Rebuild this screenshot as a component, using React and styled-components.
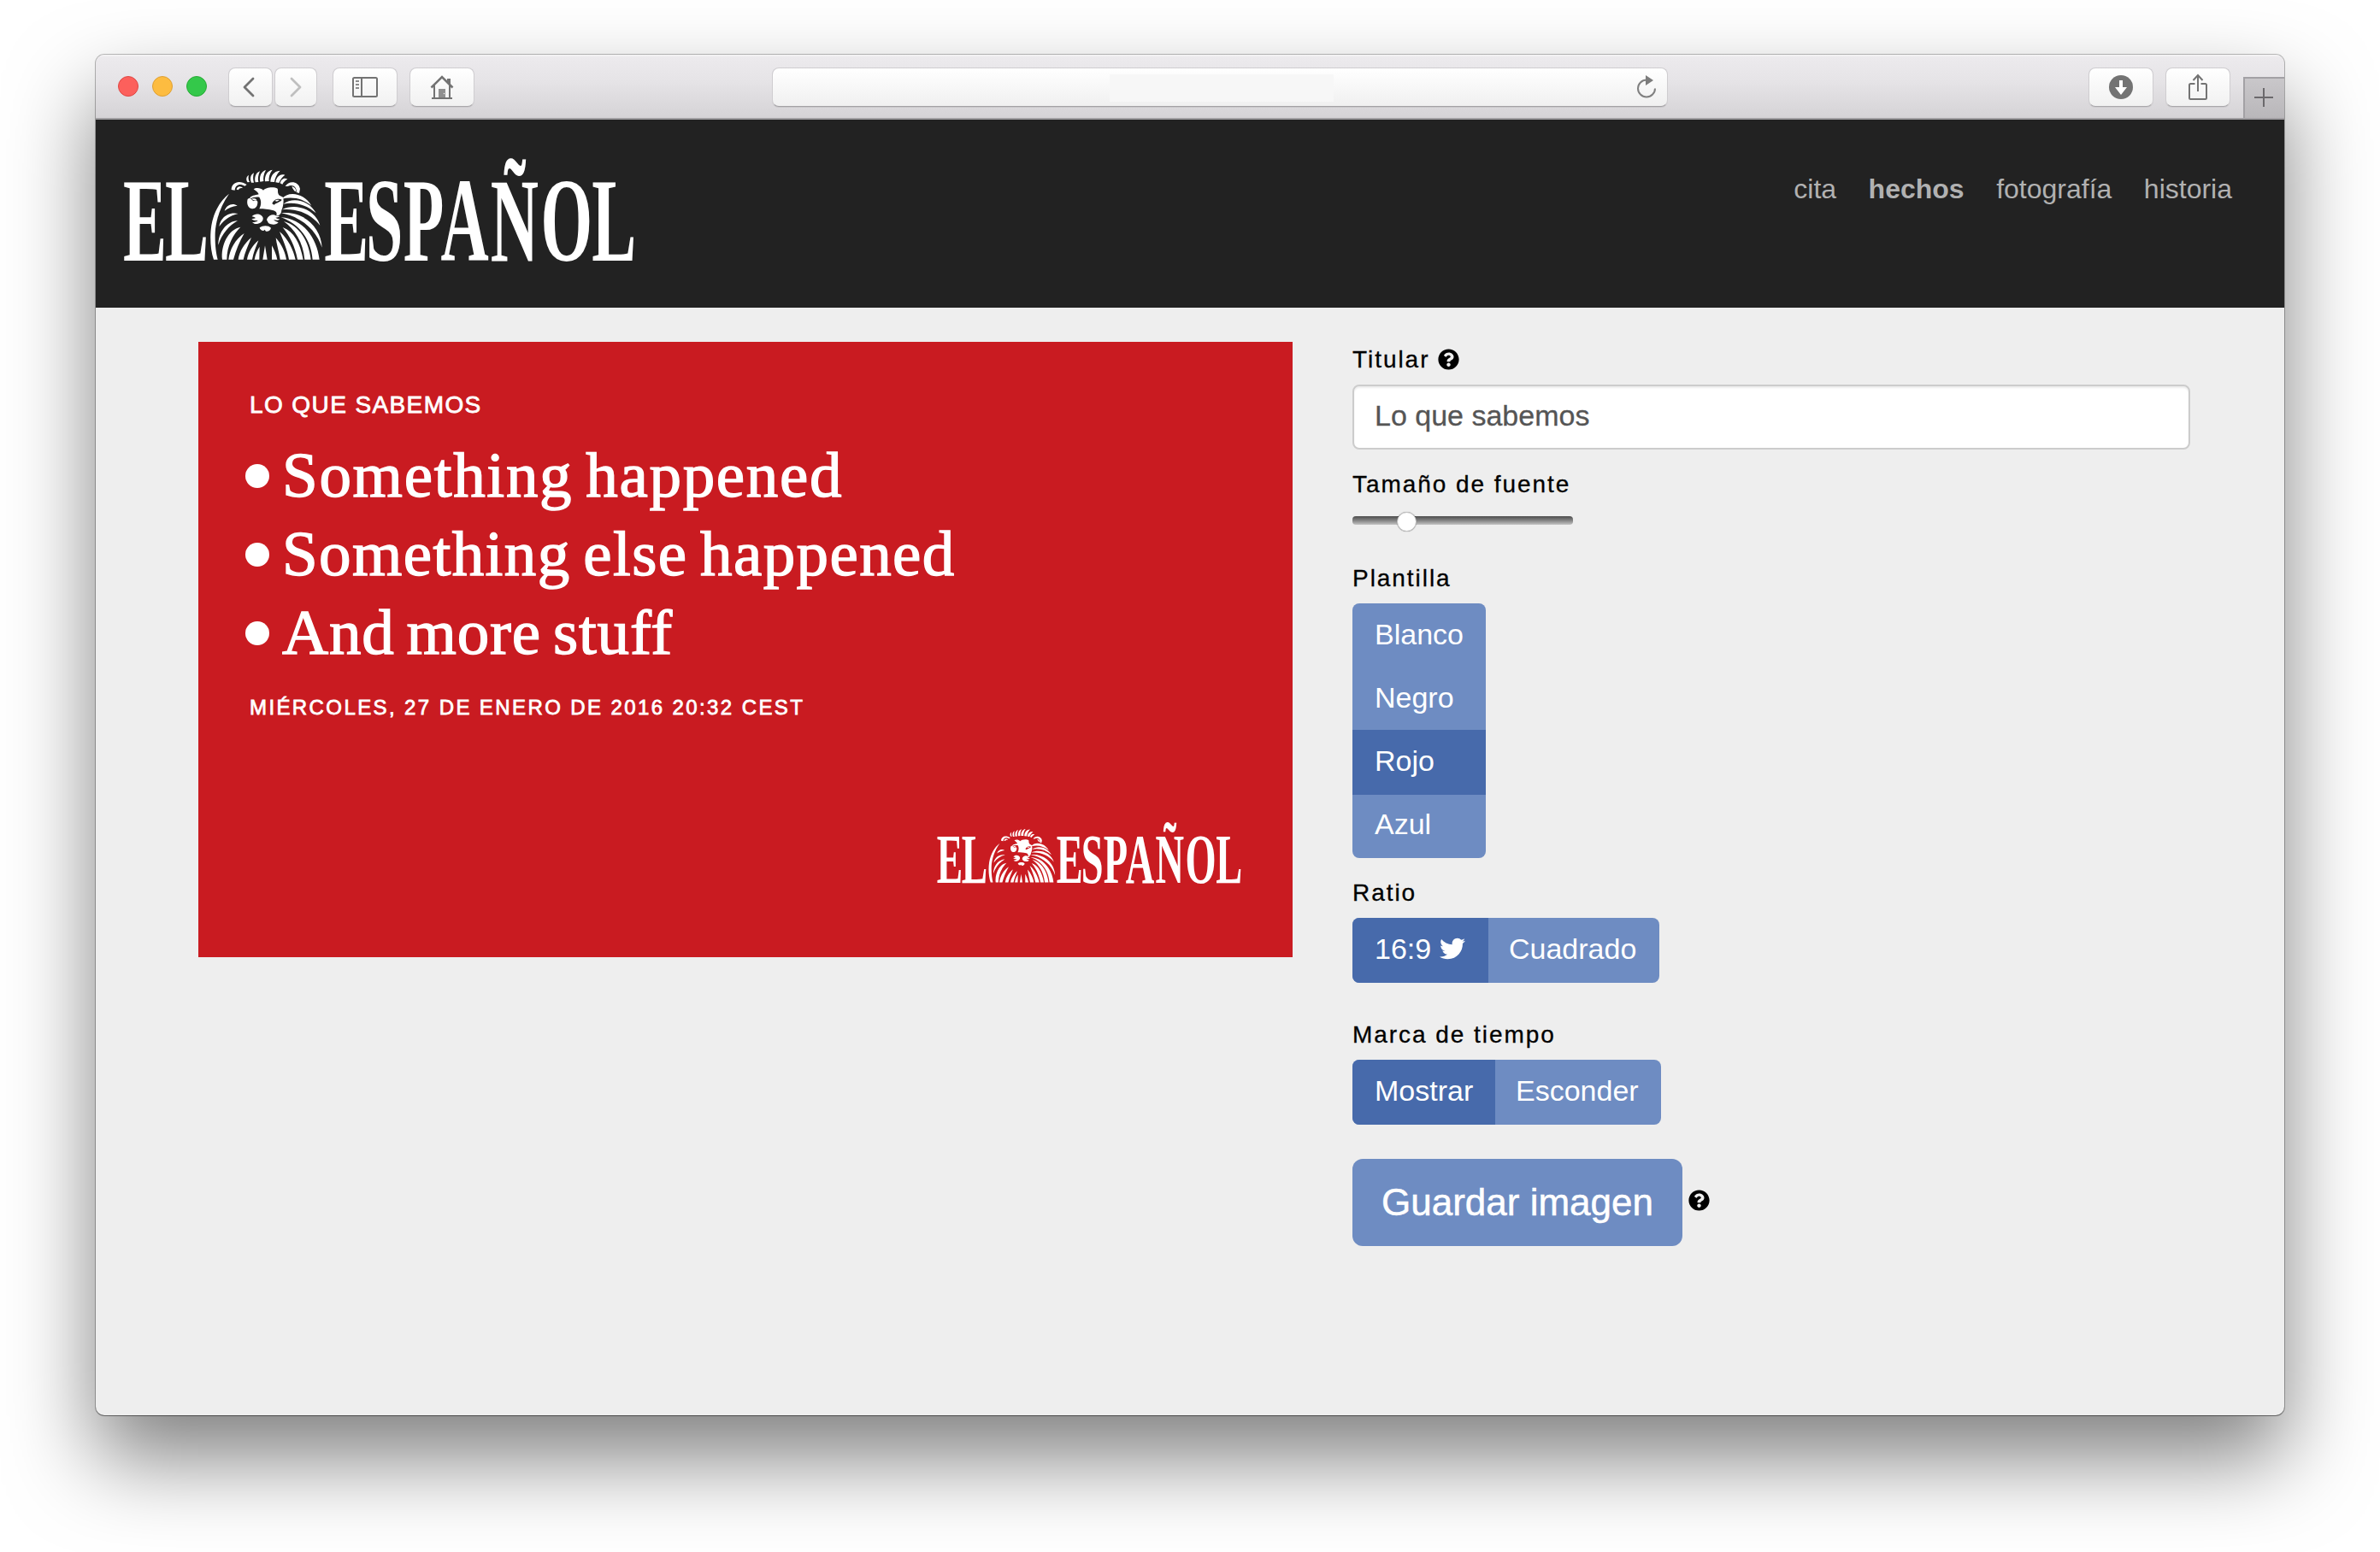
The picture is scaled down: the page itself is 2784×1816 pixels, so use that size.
import React, { useState } from "react";
import styled, { createGlobalStyle } from "styled-components";
import { FaQuestionCircle, FaTwitter } from "react-icons/fa";

const sans = `"Liberation Sans", Arial, Helvetica, sans-serif`;
const serif = `"Liberation Serif", "Times New Roman", serif`;
const blue = "#6e8cc2";
const blueActive = "#476aab";

const GlobalStyle = createGlobalStyle`
  *, *::before, *::after { box-sizing: border-box; }
  body { margin: 0; background: #fff; font-family: ${sans}; overflow: hidden; }
  button, input { font-family: inherit; margin: 0; }
`;

const Desktop = styled.div`
  width: 2784px;
  height: 1816px;
  padding: 64px 112px 0;
  overflow: hidden;
`;

const Window = styled.div`
  height: 1592px;
  border-radius: 10px;
  overflow: hidden;
  background: #eee;
  display: flex;
  flex-direction: column;
  box-shadow: 0 0 0 1px rgba(0, 0, 0, 0.26), 0 1px 1px rgba(0, 0, 0, 0.3),
    0 50px 100px rgba(0, 0, 0, 0.5);
`;

const Toolbar = styled.div`
  height: 76px;
  flex: none;
  display: grid;
  grid-template-columns: 791px 1048px 1fr;
  align-items: center;
  background: linear-gradient(#f6f5f6 0, #eceaed 3px, #e6e4e7 30px, #d5d3d6 100%);
  border-bottom: 2px solid #a09ea1;
`;

const ToolGroup = styled.div`
  display: flex;
  align-items: center;
`;

const Lights = styled.div`
  display: flex;
  gap: 16px;
  padding: 0 25px 0 26px;
`;

const Light = styled.span`
  width: 24px;
  height: 24px;
  border-radius: 50%;
  background: ${(p) => p.$fill};
  border: 1px solid ${(p) => p.$edge};
`;

const ToolButton = styled.button`
  width: ${(p) => p.$w}px;
  height: 46px;
  margin-left: ${(p) => p.$gap || 0}px;
  margin-top: 1px;
  padding: 0 1px 0 0;
  display: flex;
  align-items: center;
  justify-content: center;
  border: 1px solid #cfcdd0;
  border-bottom-color: #a9a7aa;
  border-radius: 8px;
  background: linear-gradient(#fff, #f1f1f1);
  box-shadow: 0 1px 0 rgba(0, 0, 0, 0.06);
`;

const BackButton = styled(ToolButton)`
  padding-right: 4px;
`;

const AddressBar = styled.div`
  height: 46px;
  margin-top: 1px;
  display: grid;
  grid-template-columns: 394px 262px 1fr;
  align-items: center;
  border: 1px solid #cfcdd0;
  border-bottom-color: #a3a1a4;
  border-radius: 8px;
  background: linear-gradient(#fff, #f0f0f0);
  box-shadow: 0 1px 0 rgba(0, 0, 0, 0.08);
`;

const AddressText = styled.div`
  grid-column: 2;
  height: 32px;
  margin-top: 2px;
  background: #f7f7f7;
`;

const ReloadSlot = styled.div`
  display: flex;
  justify-content: flex-end;
  padding-right: 12px;
`;

const RightTools = styled(ToolGroup)`
  height: 74px;
  justify-content: flex-end;
`;

const NewTab = styled.div`
  width: 48px;
  height: 48px;
  margin-left: 15px;
  padding: 0 2px 2px 0;
  align-self: flex-end;
  display: flex;
  align-items: center;
  justify-content: center;
  border: solid #a3a1a5;
  border-width: 2px 0 0 2px;
  background: linear-gradient(#c9c7ca, #b9b7ba);
`;

const Header = styled.header`
  height: 220px;
  flex: none;
  display: flex;
  justify-content: space-between;
  align-items: flex-start;
  background: #222;
`;

const Brand = styled.div`
  padding: 47px 0 0 31px;
  color: #fff;
`;

const LogoSvg = styled.svg`
  display: block;
  overflow: visible;
  fill: currentColor;
`;

const Nav = styled.nav`
  display: flex;
  gap: 37.5px;
  padding: 59px 61px 0 0;
`;

const NavLink = styled.a`
  font-size: 32px;
  line-height: 44px;
  color: #b1b1b1;
  font-weight: ${(p) => (p.$active ? 700 : 400)};
`;

const Main = styled.main`
  display: flex;
  align-items: flex-start;
  gap: 70px;
  padding: 40px 0 0 120px;
`;

const Card = styled.section`
  width: 1280px;
  height: 720px;
  flex: none;
  display: flex;
  flex-direction: column;
  padding: 54px 60px 83px;
  background: #c91b21;
  color: #fff;
`;

const Kicker = styled.div`
  font-size: 28px;
  line-height: 40px;
  letter-spacing: 1.4px;
  text-transform: uppercase;
  -webkit-text-stroke: 0.8px #fff;
`;

const Facts = styled.ul`
  list-style: none;
  margin: 16px 0 24px -5px;
  padding: 0;
`;

const Fact = styled.li`
  display: flex;
  align-items: center;
  gap: 15px;
  font-family: ${serif};
  font-size: 75px;
  line-height: 92px;
  letter-spacing: ${(p) => p.$tracking}px;
  word-spacing: -5.5px;
  white-space: nowrap;
  font-variant-ligatures: none;
  -webkit-text-stroke: 1.4px #fff;

  &::before {
    content: "";
    width: 28px;
    height: 28px;
    flex: none;
    margin-top: 2px;
    border-radius: 50%;
    background: #fff;
  }
`;

const Timestamp = styled.div`
  font-size: 24px;
  line-height: 36px;
  letter-spacing: 2.4px;
  text-transform: uppercase;
  -webkit-text-stroke: 0.8px #fff;
`;

const CardBrand = styled.div`
  margin: auto 0 0 auto;
`;

const Form = styled.form`
  width: 980px;
  display: flex;
  flex-direction: column;
  align-items: flex-start;
`;

const Field = styled.div`
  width: 100%;
  display: flex;
  flex-direction: column;
  align-items: flex-start;
  margin-bottom: ${(p) => p.$after}px;
`;

const Label = styled.label`
  display: flex;
  align-items: center;
  gap: 10px;
  height: 40px;
  margin-bottom: 10px;
  padding-top: 1px;
  font-size: 28px;
  line-height: 40px;
  letter-spacing: 1.95px;
  color: #000;
  -webkit-text-stroke: 0.3px #000;
`;

const TextInput = styled.input`
  width: 100%;
  height: 76px;
  padding: 10px 24px 14px;
  border: 2px solid #ccc;
  border-radius: 8px;
  background: #fff;
  box-shadow: inset 0 2px 2px rgba(0, 0, 0, 0.075);
  font-size: 34px;
  line-height: 48px;
  color: #555;
  outline: none;
  -webkit-text-stroke: 0.3px #555;
`;

const Slider = styled.input`
  appearance: none;
  display: block;
  width: 258px;
  height: 10px;
  margin: 8px 0 2px;
  border-radius: 4px;
  background: linear-gradient(#4c4c4c, #838383 50%, #c4c4c4);

  &::-webkit-slider-thumb {
    appearance: none;
    width: 23px;
    height: 23px;
    margin-top: 3px;
    border: 1px solid #c4c4c4;
    border-radius: 50%;
    background: #fff;
    box-shadow: 0 0 1px rgba(0, 0, 0, 0.4);
  }
`;

const ButtonGroup = styled.div`
  display: flex;
  flex-direction: ${(p) => (p.$vertical ? "column" : "row")};
  border-radius: 8px;
  overflow: hidden;
  background: ${blue};

  > * + * {
    margin-top: ${(p) => (p.$vertical ? "-2px" : "0")};
  }
`;

const Option = styled.button`
  display: flex;
  align-items: center;
  gap: 10px;
  height: 76px;
  width: ${(p) => p.$w}px;
  padding: 12px 0 16px ${(p) => p.$inset || 26}px;
  border: 0;
  background: ${(p) => (p.$active ? blueActive : "transparent")};
  color: #fff;
  font-size: 34px;
  line-height: 48px;
  text-align: left;
`;

const SaveRow = styled.div`
  display: flex;
  align-items: center;
  gap: 7px;
`;

const SaveButton = styled.button`
  width: 386px;
  height: 102px;
  padding: 22px 0;
  border: 0;
  border-radius: 12px;
  background: ${blue};
  color: #fff;
  font-size: 44px;
  line-height: 58px;
  -webkit-text-stroke: 0.5px #fff;
`;

const SaveHelp = styled(FaQuestionCircle)`
  margin-top: -6px;
`;

const lionPaths = [
  // crest
  "M149 52C143 44 143 33 153 27C150 36 152 44 156 51Z",
  "M162 53C156 40 159 25 171 19C167 31 168 43 171 53Z",
  "M176 52C172 36 177 19 192 13C186 27 184 40 187 51Z",
  "M193 50C189 34 196 13 213 9C205 23 203 37 205 48Z",
  "M210 49C208 30 217 11 236 8C226 21 222 36 224 48Z",
  "M229 50C229 32 240 12 263 11C251 23 245 37 243 51Z",
  "M247 52C249 36 261 20 280 26C270 33 263 43 259 54Z",
  "M263 55C266 43 276 34 289 41C281 45 275 51 271 59Z",
  // ears
  "M92 78C92 53 119 42 146 60L139 65C121 55 106 61 104 80Z",
  "M110 77C111 66 125 62 133 73C125 71 119 73 117 79Z",
  "M281 66C294 44 328 48 333 75L330 90L320 87C323 68 306 57 290 66Z",
  "M304 67C315 69 321 78 317 85C311 81 308 75 304 67Z",
  // left mane
  "M84 92C54 135 37 185 35 230C34 270 38 300 44 323L30 323C18 290 16 240 22 203C30 157 53 115 84 92Z",
  "M68 152C75 131 96 123 113 134C95 136 81 142 68 152Z",
  "M49 207C54 174 84 154 116 162C90 167 67 182 49 207Z",
  "M46 272C46 228 74 189 114 187C85 203 59 232 46 272Z",
  "M60 323C54 275 80 217 124 209C98 235 76 275 76 323Z",
  "M82 323C86 288 106 251 137 231C120 262 108 290 99 323Z",
  "M116 323C120 294 138 266 162 246C150 275 139 300 134 323Z",
  "M147 323C151 299 166 273 187 256C178 280 169 300 165 323Z",
  "M173 323C176 304 184 289 191 278L190 323Z",
  "M202 323L210 274L218 323Z",
  // right mane
  "M234 323L234 274C243 290 249 305 253 323Z",
  "M263 323C259 295 250 268 248 247C269 270 281 298 285 323Z",
  "M294 323C289 290 271 250 261 225C291 250 309 288 317 323Z",
  "M324 323C315 275 296 240 272 210C312 225 333 265 344 323Z",
  "M349 323C344 263 314 216 276 189C333 205 364 260 371 323Z",
  "M377 323C372 254 332 199 266 175C342 180 392 245 401 323Z",
  "M410 281C393 227 345 174 267 160C349 152 407 213 410 281Z",
  "M403 203C373 165 325 143 270 148C316 123 386 146 403 203Z",
  "M389 160C355 130 315 119 274 128C310 101 366 117 389 160Z",
  "M373 134C343 110 311 101 269 110C292 80 349 90 373 134Z",
  // face
  "M170 76C178 69 196 71 204 80C212 69 241 66 254 74C257 82 252 89 261 98L273 104L275 115C275 130 272 142 268 150C267 165 257 171 250 167C253 159 249 155 240 151C220 146 208 146 190 145C198 130 197 115 190 104C180 102 168 105 156 109C160 98 175 98 188 94C185 86 178 82 170 76ZM235 127C240 112 256 106 269 113C265 121 250 123 242 131Z",
  "M149 111C157 104 163 112 169 118C175 114 181 113 184 120C185 138 174 147 162 144C149 141 145 125 149 111Z",
  "M164 172C176 157 200 163 203 177C205 190 190 200 174 198L165 193C174 192 181 190 185 186C175 186 166 185 163 180C168 180 174 179 177 177C172 174 168 173 164 172Z",
  "M216 184C219 168 239 161 248 169L262 171C256 175 253 176 247 176C252 180 258 181 262 181C256 187 249 186 240 183C247 190 253 191 257 193C251 202 232 202 222 195Z",
  "M191 211C203 202 223 203 231 212C229 221 221 226 213 224L209 218L205 222C197 222 192 217 191 211Z",
  "M163 110C168 108 177 109 181 113L170 115Z",
  "M244 117C249 113 256 112 261 114L252 119Z",
];

function Logo({ width }) {
  return (
    <LogoSvg width={width} height={(width * 124) / 600} viewBox="0 0 600 124">
      <g fontFamily="Liberation Serif, Times New Roman, serif" fontWeight="700" fontSize="139">
        <text transform="translate(0 118) scale(.55 1)" x="2 91">EL</text>
        <text transform="translate(0 118) scale(.56 1)" x="422 509 587 665 769 874 981">ESPAÑOL</text>
      </g>
      <g transform="translate(97 9) scale(.3333)" fillRule="evenodd">
        {lionPaths.map((d) => (
          <path key={d} d={d} />
        ))}
      </g>
    </LogoSvg>
  );
}

const ChevronIcon = ({ color, flip }) => (
  <svg width="16" height="26" viewBox="0 0 16 26" fill="none" stroke={color} strokeWidth="2.8" strokeLinecap="round" strokeLinejoin="round">
    <path d={flip ? "M3 3L13 13L3 23" : "M13 3L3 13L13 23"} />
  </svg>
);

const SidebarIcon = () => (
  <svg width="30" height="24" viewBox="0 0 30 24" fill="none" stroke="#737373" strokeWidth="2">
    <rect x="1" y="1" width="28" height="22" rx="1.5" />
    <path d="M11 1V23" />
    <path d="M4 5H8M4 9H8M4 13H8" strokeWidth="1.8" stroke="#8c8c8c" />
  </svg>
);

const HomeIcon = () => (
  <svg width="28" height="28" viewBox="0 0 28 28" fill="none" stroke="#737373" strokeWidth="2">
    <path d="M1.5 14.5L14 2L26.5 14.5" strokeWidth="2.6" />
    <path d="M5 12V26.500M23 12V26.500M2 27H26" />
    <path d="M20 4H24V12L20 8Z" fill="#737373" stroke="none" />
    <path d="M10 16H18V26H10Z" fill="#8f8f8f" stroke="none" />
    <circle cx="16.500" cy="21.500" r=".7" fill="#fff" stroke="none" />
  </svg>
);

const ReloadIcon = () => (
  <svg width="24" height="28" viewBox="0 0 24 28">
    <path d="M12 5.500A10 10 0 1 0 22 15.500" fill="none" stroke="#808080" strokeWidth="2" />
    <path d="M11 0V12L20 6Z" fill="#7c7c7c" />
  </svg>
);

const DownloadIcon = () => (
  <svg width="28" height="28" viewBox="0 0 28 28">
    <circle cx="14" cy="14" r="14" fill="#737373" />
    <path d="M12 6H16V14H21L14 23L7 14H12Z" fill="#fff" />
  </svg>
);

const ShareIcon = () => (
  <svg width="24" height="32" viewBox="0 0 24 32" fill="none" stroke="#737373" strokeWidth="2">
    <path d="M8.500 12H3.500Q2 12 2 13.500V28.500Q2 30 3.500 30H20.500Q22 30 22 28.500V13.500Q22 12 20.500 12H15.500" />
    <path d="M12 21V2.500M6.500 8L12 2L17.500 8" />
  </svg>
);

const PlusIcon = () => (
  <svg width="22" height="22" viewBox="0 0 22 22" stroke="#6b696c" strokeWidth="2">
    <path d="M11 0V22M0 11H22" />
  </svg>
);

const facts = [
  { text: "Something happened", tracking: 1.7 },
  { text: "Something else happened", tracking: 1.4 },
  { text: "And more stuff", tracking: 0.8 },
];

export default function App() {
  const [title, setTitle] = useState("Lo que sabemos");
  const [size, setSize] = useState(22);
  const [theme, setTheme] = useState("Rojo");
  return (
    <>
      <GlobalStyle />
      <Desktop>
        <Window>
          <Toolbar>
            <ToolGroup>
              <Lights>
                <Light $fill="#fc605c" $edge="#df4744" />
                <Light $fill="#fdbc40" $edge="#dea034" />
                <Light $fill="#34c84a" $edge="#27aa35" />
              </Lights>
              <BackButton $w={52}><ChevronIcon color="#737373" /></BackButton>
              <ToolButton $w={50} $gap={2}><ChevronIcon color="#bfbfbf" flip /></ToolButton>
              <ToolButton $w={76} $gap={18}><SidebarIcon /></ToolButton>
              <ToolButton $w={76} $gap={14}><HomeIcon /></ToolButton>
            </ToolGroup>
            <AddressBar>
              <AddressText />
              <ReloadSlot><ReloadIcon /></ReloadSlot>
            </AddressBar>
            <RightTools>
              <ToolButton $w={76}><DownloadIcon /></ToolButton>
              <ToolButton $w={76} $gap={14}><ShareIcon /></ToolButton>
              <NewTab><PlusIcon /></NewTab>
            </RightTools>
          </Toolbar>
          <Header>
            <Brand><Logo width={600} /></Brand>
            <Nav>
              <NavLink>cita</NavLink>
              <NavLink $active>hechos</NavLink>
              <NavLink>fotografía</NavLink>
              <NavLink>historia</NavLink>
            </Nav>
          </Header>
          <Main>
            <Card>
              <Kicker>{title}</Kicker>
              <Facts>
                {facts.map((f) => (
                  <Fact key={f.text} $tracking={f.tracking}>{f.text}</Fact>
                ))}
              </Facts>
              <Timestamp>Miércoles, 27 de enero de 2016 20:32 CEST</Timestamp>
              <CardBrand><Logo width={357.4} /></CardBrand>
            </Card>
            <Form onSubmit={(e) => e.preventDefault()}>
              <Field $after={20}>
                <Label>Titular <FaQuestionCircle size={25} /></Label>
                <TextInput value={title} onChange={(e) => setTitle(e.target.value)} />
              </Field>
              <Field $after={40}>
                <Label>Tamaño de fuente</Label>
                <Slider type="range" min="0" max="100" value={size} onChange={(e) => setSize(e.target.value)} />
              </Field>
              <Field $after={20}>
                <Label>Plantilla</Label>
                <ButtonGroup $vertical>
                  {["Blanco", "Negro", "Rojo", "Azul"].map((name) => (
                    <Option key={name} type="button" $w={156} $active={name === theme} onClick={() => setTheme(name)}>
                      {name}
                    </Option>
                  ))}
                </ButtonGroup>
              </Field>
              <Field $after={40}>
                <Label>Ratio</Label>
                <ButtonGroup>
                  <Option type="button" $w={159} $active>16:9 <FaTwitter size={30} /></Option>
                  <Option type="button" $w={200} $inset={24}>Cuadrado</Option>
                </ButtonGroup>
              </Field>
              <Field $after={40}>
                <Label>Marca de tiempo</Label>
                <ButtonGroup>
                  <Option type="button" $w={167} $active>Mostrar</Option>
                  <Option type="button" $w={194} $inset={24}>Esconder</Option>
                </ButtonGroup>
              </Field>
              <SaveRow>
                <SaveButton type="button">Guardar imagen</SaveButton>
                <SaveHelp size={25} />
              </SaveRow>
            </Form>
          </Main>
        </Window>
      </Desktop>
    </>
  );
}
